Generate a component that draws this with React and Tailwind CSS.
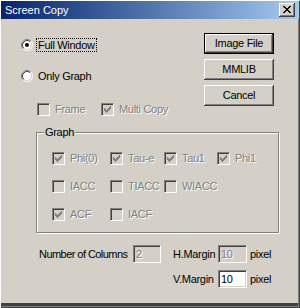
import React from 'react';

const CHECK = [[2, 4], [3, 5], [4, 6], [5, 5], [6, 4], [7, 3], [8, 2]];
const XMARK = [
  [0, 0], [1, 0], [6, 0], [7, 0],
  [1, 1], [2, 1], [5, 1], [6, 1],
  [2, 2], [3, 2], [4, 2], [5, 2],
  [3, 3], [4, 3],
  [2, 4], [3, 4], [4, 4], [5, 4],
  [1, 5], [2, 5], [5, 5], [6, 5],
  [0, 6], [1, 6], [6, 6], [7, 6],
];

const Radio = ({ checked }) => (
  <svg width="12" height="12" viewBox="0 0 12 12" className="shrink-0">
    <circle cx="6" cy="6" r="5" fill="#fff" />
    <path d="M2.11 9.89 A5.5 5.5 0 0 1 9.89 2.11" fill="none" stroke="#808080" />
    <path d="M9.89 2.11 A5.5 5.5 0 0 1 2.11 9.89" fill="none" stroke="#fff" />
    <path d="M2.82 9.18 A4.5 4.5 0 0 1 9.18 2.82" fill="none" stroke="#404040" />
    <path d="M9.18 2.82 A4.5 4.5 0 0 1 2.82 9.18" fill="none" stroke="#d4d0c8" />
    {checked && <circle cx="6" cy="6" r="2" fill="#000" />}
  </svg>
);

const Check = ({ checked, label, className = '' }) => (
  <div className={`flex items-center gap-[5px] h-[13px] ${className}`}>
    <div className="w-[13px] h-[13px] shrink-0 bg-[#d4d0c8] border border-t-[#808080] border-l-[#808080] border-b-white border-r-white shadow-[inset_1px_1px_0_#404040,inset_-1px_-1px_0_#d4d0c8]">
      {checked && (
        <svg width="11" height="11" shapeRendering="crispEdges">
          {CHECK.map(([x, y]) => (
            <rect key={x} x={x} y={y} width="1" height="3" fill="#808080" />
          ))}
        </svg>
      )}
    </div>
    <span className="text-[#808080] [text-shadow:1px_1px_0_#fff] whitespace-nowrap">{label}</span>
  </div>
);

const Button = ({ children, isDefault }) => (
  <div
    className={`w-[70px] h-[21px] flex items-center justify-center ${
      isDefault
        ? 'border border-black shadow-[inset_-1px_-1px_0_#404040,inset_1px_1px_0_#fff,inset_-2px_-2px_0_#808080]'
        : 'shadow-[inset_-1px_-1px_0_#404040,inset_1px_1px_0_#fff,inset_-2px_-2px_0_#808080,inset_2px_2px_0_#d4d0c8]'
    }`}
  >
    {children}
  </div>
);

const Field = ({ value, enabled, width }) => (
  <div
    className={`h-[18px] ${width} flex items-center pl-[2px] border border-t-[#808080] border-l-[#808080] border-b-white border-r-white shadow-[inset_1px_1px_0_#404040,inset_-1px_-1px_0_#d4d0c8] ${
      enabled ? 'bg-white text-black' : 'bg-[#d4d0c8] text-[#808080] [text-shadow:1px_1px_0_#fff]'
    }`}
  >
    {value}
  </div>
);

export default function App() {
  const graph = [
    ['Phi(0)', true], ['Tau-e', true], ['Tau1', true], ['Phi1', true],
    ['IACC', false], ['TIACC', false], ['WIACC', false], null,
    ['ACF', true], ['IACF', false],
  ];

  return (
    <div className="w-[300px] h-[308px] overflow-hidden bg-[#d4d0c8] font-['Liberation_Sans',Arial,sans-serif] text-[11px] leading-[13px] tracking-[-0.3px] text-black shadow-[inset_1px_1px_0_#fff,inset_-1px_-1px_0_#404040,inset_-2px_-2px_0_#808080,inset_0_-5px_0_#404040]">
      {/* Title bar */}
      <div className="mx-[1px] mt-[1px] h-[18px] flex items-center justify-between pl-[4px] pr-[4px] bg-linear-to-r from-[#0a246a] to-[#a6caf0]">
        <span className="text-white tracking-normal">Screen Copy</span>
        <div className="w-[16px] h-[14px] bg-[#d4d0c8] shadow-[inset_-1px_-1px_0_#404040,inset_1px_1px_0_#fff,inset_-2px_-2px_0_#808080]">
          <svg width="16" height="14" shapeRendering="crispEdges">
            {XMARK.map(([x, y], i) => (
              <rect key={i} x={x + 4} y={y + 3} width="1" height="1" fill="#000" />
            ))}
          </svg>
        </div>
      </div>

      <div className="flex">
        <div className="w-[204px] pl-[21px] pt-[19px] flex flex-col">
          <div className="h-[14px] flex items-center">
            <Radio checked />
            <span className="ml-[3px] px-[1px] border border-dotted border-black leading-[12px]">Full Window</span>
          </div>
          <div className="h-[14px] mt-[17px] flex items-center">
            <Radio />
            <span className="ml-[3px] px-[1px] border border-transparent leading-[12px]">Only Graph</span>
          </div>
          <div className="mt-[20px] ml-[16px] flex">
            <Check label="Frame" className="w-[64px]" />
            <Check label="Multi Copy" checked />
          </div>
        </div>
        <div className="pt-[14px] flex flex-col gap-[5px]">
          <Button isDefault>Image File</Button>
          <Button>MMLIB</Button>
          <Button>Cancel</Button>
        </div>
      </div>

      {/* Graph group */}
      <div className="relative mt-[16px] ml-[36px] w-[243px] h-[101px] border border-[#808080] shadow-[1px_1px_0_#fff,inset_1px_1px_0_#fff]">
        <span className="absolute -top-[7px] left-[7px] px-[1px] bg-[#d4d0c8]">Graph</span>
        <div className="grid grid-cols-[58px_54px_53px_auto] gap-y-[15px] pt-[19px] pl-[15px]">
          {graph.map((g, i) =>
            g ? <Check key={i} label={g[0]} checked={g[1]} /> : <div key={i} />
          )}
        </div>
      </div>

      <div className="mt-[12px] pl-[39px] flex items-center">
        <span className="w-[94px] whitespace-nowrap tracking-[-0.55px]">Number of Columns</span>
        <Field value="2" width="w-[28px]" />
        <span className="ml-[12px] w-[45px]">H.Margin</span>
        <Field value="10" width="w-[29px]" />
        <span className="ml-[3px]">pixel</span>
      </div>
      <div className="mt-[7px] pl-[173px] flex items-center">
        <span className="w-[45px]">V.Margin</span>
        <Field value="10" width="w-[29px]" enabled />
        <span className="ml-[3px]">pixel</span>
      </div>
    </div>
  );
}
